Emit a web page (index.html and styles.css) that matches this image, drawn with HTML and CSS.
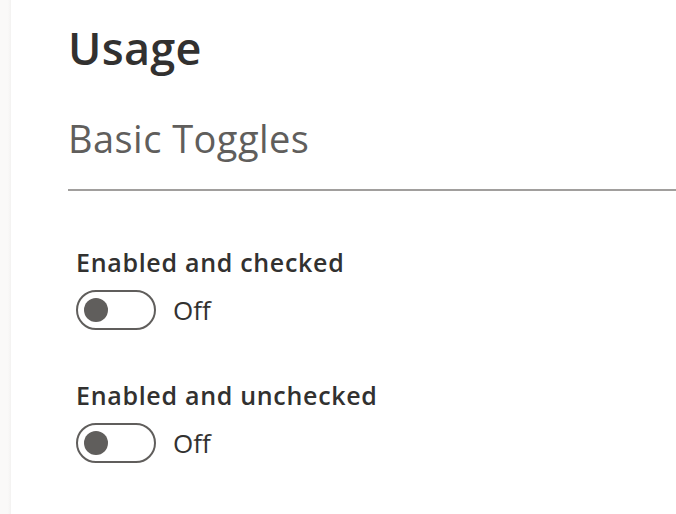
FILE: index.html
```html
<!DOCTYPE html>
<html>
<head>
<meta charset="utf-8">
<link rel="stylesheet" href="styles.css">
</head>
<body>
<div class="page">
  <div class="rail"></div>
  <main class="content">
    <h1 class="title">Usage</h1>
    <h2 class="subtitle">Basic Toggles</h2>
    <div class="divider"></div>
    <div class="field first">
      <div class="label">Enabled and checked</div>
      <div class="toggle-row">
        <span class="toggle"><span class="thumb"></span></span>
        <span class="state">Off</span>
      </div>
    </div>
    <div class="field">
      <div class="label">Enabled and unchecked</div>
      <div class="toggle-row">
        <span class="toggle"><span class="thumb"></span></span>
        <span class="state">Off</span>
      </div>
    </div>
  </main>
</div>
</body>
</html>
```
FILE: styles.css
```css
html, body {
  margin: 0;
  padding: 0;
  background: #ffffff;
}
body {
  font-family: "Open Sans", "Noto Sans", sans-serif;
  color: #323130;
  width: 676px;
  height: 514px;
  overflow: hidden;
}
.page {
  display: flex;
  height: 514px;
}
.rail {
  width: 11px;
  flex: none;
  background: linear-gradient(to right, #faf9f8 0, #faf9f8 8px, #f3f2f1 11px);
}
.content {
  flex: 1;
  padding-left: 57px;
}
.title {
  margin: 0;
  padding-top: 19px;
  font-size: 45px;
  font-weight: 600;
  line-height: 58px;
  letter-spacing: 0.3px;
  color: #323130;
}
.subtitle {
  margin: 0;
  padding-top: 37px;
  font-size: 38px;
  font-weight: 400;
  line-height: 48px;
  letter-spacing: 0.45px;
  color: #605e5c;
}
.divider {
  height: 2px;
  background: #a19f9d;
  margin-top: 27px;
}
.field {
  padding-left: 8px;
  margin-top: 46px;
}
.field.first {
  margin-top: 54px;
}
.label {
  font-size: 25px;
  font-weight: 600;
  line-height: 34px;
  letter-spacing: 0.7px;
  color: #323130;
}
.toggle-row {
  display: flex;
  align-items: center;
  gap: 17px;
  margin-top: 9px;
  height: 44px;
}
.toggle {
  box-sizing: border-box;
  width: 80px;
  height: 40px;
  border: 2px solid #605e5c;
  border-radius: 20px;
  display: flex;
  align-items: center;
  padding-left: 6px;
}
.thumb {
  width: 24px;
  height: 24px;
  border-radius: 50%;
  background: #605e5c;
}
.state {
  font-size: 26px;
  line-height: 36px;
  color: #323130;
}
```
